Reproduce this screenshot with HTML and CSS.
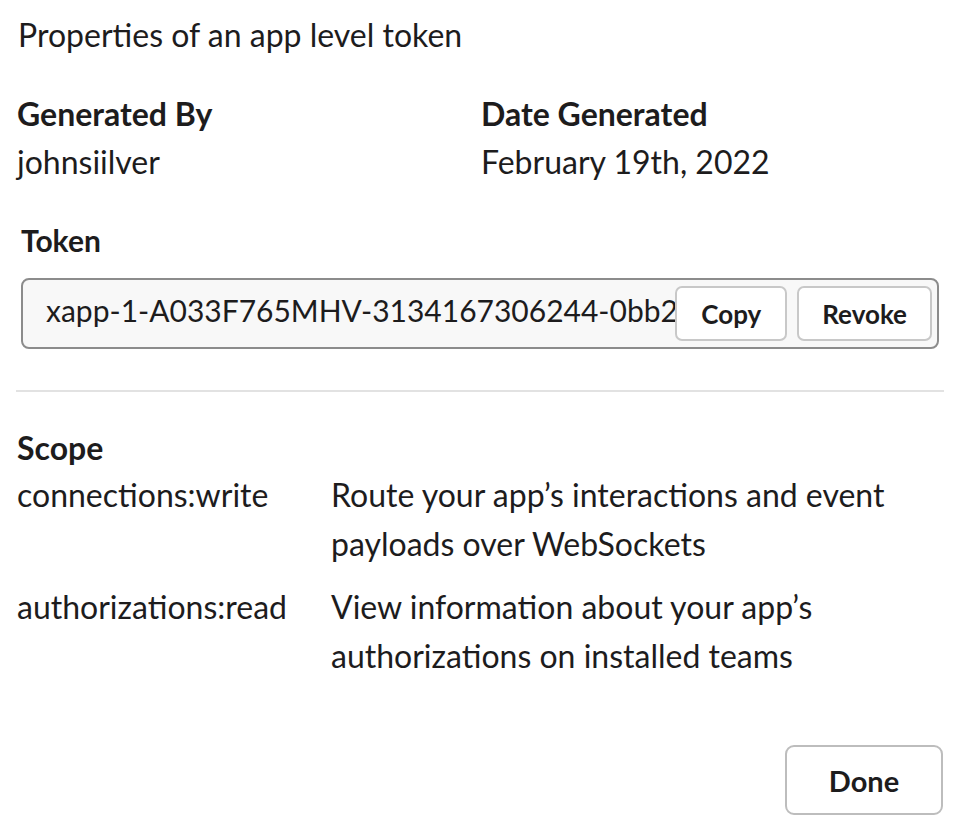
FILE: index.html
```html
<!DOCTYPE html>
<html lang="en">
<head>
<meta charset="utf-8">
<title>App level token</title>
<link rel="stylesheet" href="styles.css">
</head>
<body>
<div class="modal">
  <p class="intro">Properties of an app level token</p>
  <div class="meta">
    <div class="meta-item">
      <div class="label">Generated By</div>
      <div class="value">johnsiilver</div>
    </div>
    <div class="meta-item">
      <div class="label">Date Generated</div>
      <div class="value">February 19th, 2022</div>
    </div>
  </div>
  <div class="token-section">
    <div class="label token-label">Token</div>
    <div class="token-box">
      <div class="token-text">xapp-1-A033F765MHV-3134167306244-0bb2f1c9d8e7a6b5c4d3e2f1a0b9c8d7</div>
      <button class="btn btn-copy">Copy</button>
      <button class="btn btn-revoke">Revoke</button>
    </div>
  </div>
  <hr class="divider">
  <div class="scope">
    <div class="label">Scope</div>
    <div class="scope-grid">
      <div class="scope-name">connections:write</div>
      <div class="scope-desc">Route your app’s interactions and event payloads over WebSockets</div>
      <div class="scope-name">authorizations:read</div>
      <div class="scope-desc">View information about your app’s authorizations on installed teams</div>
    </div>
  </div>
  <div class="footer">
    <button class="btn btn-done">Done</button>
  </div>
</div>
</body>
</html>
```
FILE: styles.css
```css
html, body {
  margin: 0;
  padding: 0;
  background: #ffffff;
}
body {
  font-family: Lato, "Open Sans", sans-serif;
  color: #1d1c1d;
  font-size: 32px;
}
.modal {
  padding: 11px 14px 0 17px;
}
.intro {
  margin: 0;
  line-height: 48px;
  padding-left: 1px;
}
.meta {
  display: grid;
  grid-template-columns: 464px 1fr;
  margin-top: 31px;
}
.label {
  font-weight: 700;
  line-height: 48px;
}
.value {
  line-height: 48px;
}
.token-section {
  margin-top: 30px;
  padding-left: 4px;
}
.token-label {
  font-size: 30px;
}
.token-box {
  box-sizing: border-box;
  margin-top: 14px;
  display: flex;
  align-items: center;
  height: 71px;
  width: 918px;
  border: 2px solid #8c8c8c;
  border-radius: 8px;
  background: #f8f8f8;
  padding: 0 5px 0 23px;
}
.token-text {
  flex: 1;
  min-width: 0;
  white-space: nowrap;
  overflow: hidden;
  font-size: 30px;
  padding-bottom: 7px;
}
.btn {
  font-family: Lato, "Open Sans", sans-serif;
  font-weight: 700;
  font-size: 26px;
  color: #1d1c1d;
  background: #ffffff;
  border: 2px solid #c8c8c8;
  border-radius: 7px;
  height: 55px;
  padding: 0 24px;
  cursor: pointer;
  flex: none;
}
.btn-revoke {
  margin-left: 10px;
  padding: 0 23px;
}
.divider {
  margin: 41px 0 0 -1px;
  border: 0;
  border-top: 2px solid #e2e2e2;
}
.scope {
  margin-top: 32px;
}
.scope-grid {
  display: grid;
  grid-template-columns: 314px 590px;
  row-gap: 14px;
  line-height: 49px;
  margin-top: -2px;
}
.footer {
  display: flex;
  justify-content: flex-end;
  margin-top: 65px;
  padding-right: 1px;
}
.btn-done {
  height: 70px;
  width: 158px;
  padding: 0;
  font-size: 29px;
  border-radius: 9px;
  border-color: #bdbdbd;
}
```
